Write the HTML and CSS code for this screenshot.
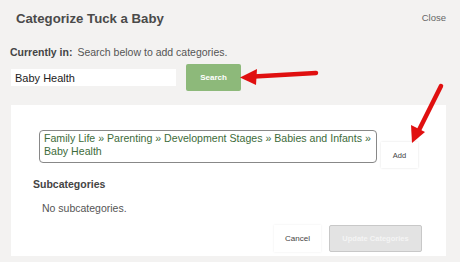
FILE: index.html
```html
<!DOCTYPE html>
<html>
<head>
<meta charset="utf-8">
<link rel="stylesheet" href="styles.css">
</head>
<body>
<div class="dialog">
  <div class="header">
    <h1 class="title">Categorize Tuck a Baby</h1>
    <span class="close">Close</span>
  </div>
  <div class="current">
    <span class="current-label">Currently in:</span>
    <span class="current-text">Search below to add categories.</span>
  </div>
  <div class="search-row">
    <div class="search-input">Baby Health</div>
    <button class="btn-search">Search</button>
  </div>
  <div class="panel">
    <div class="result-row">
      <div class="crumbs">Family Life » Parenting » Development Stages » Babies and Infants » Baby Health</div>
      <button class="btn-add">Add</button>
    </div>
    <div class="sub-title">Subcategories</div>
    <div class="sub-none">No subcategories.</div>
    <div class="actions">
      <button class="btn-cancel">Cancel</button>
      <button class="btn-update">Update Categories</button>
    </div>
  </div>
</div>
<svg class="arrows" width="460" height="262" viewBox="0 0 460 262">
  <g stroke="#e01010" stroke-width="4.5" stroke-linecap="round" fill="none">
    <path d="M316 73 L254 76.5"/>
    <path d="M441 86 L418 132"/>
  </g>
  <g fill="#e01010">
    <path d="M240 77.5 L257 69 L256 85 Z"/>
    <path d="M412 143 L411 125 L425 132 Z"/>
  </g>
</svg>
</body>
</html>
```
FILE: styles.css
```css
* { box-sizing: border-box; }
html, body { margin: 0; padding: 0; }
body {
  width: 460px;
  height: 262px;
  background: #f3f2f1;
  font-family: "Liberation Sans", Arial, sans-serif;
  color: #444;
  overflow: hidden;
  position: relative;
}
.dialog {
  padding: 9px 14px 0 11px;
}
.header {
  display: flex;
  justify-content: space-between;
  align-items: center;
  padding-left: 5px;
  height: 18px;
}
.title {
  margin: 0;
  font-size: 13.2px;
  font-weight: bold;
  color: #4a4a4a;
}
.close {
  font-size: 9.5px;
  color: #666;
  margin-top: -2px;
}
.current {
  margin-top: 19px;
  margin-left: -1px;
  font-size: 10.5px;
  display: flex;
  gap: 5px;
  color: #555;
}
.current-label { font-weight: bold; color: #444; }
.search-row {
  display: flex;
  align-items: center;
  margin-top: 6px;
  gap: 10px;
}
.search-input {
  width: 165px;
  height: 17px;
  background: #fff;
  font-size: 11px;
  color: #222;
  padding: 2px 0 0 4px;
  line-height: 14px;
}
.btn-search {
  width: 55px;
  height: 27px;
  border: none;
  border-radius: 2px;
  background: #8db97a;
  color: #fff;
  font-family: inherit;
  font-weight: bold;
  font-size: 8px;
  padding: 0;
}
.panel {
  margin-top: 14px;
  width: 435px;
  height: 151px;
  background: #fff;
  padding: 25px 0 0 28px;
}
.result-row {
  display: flex;
  align-items: flex-start;
  gap: 4px;
}
.crumbs {
  width: 338px;
  height: 33px;
  border: 1px solid #888;
  border-radius: 4px;
  padding: 1px 4px 0 4px;
  font-size: 10.6px;
  line-height: 13px;
  color: #3d6b3a;
}
.btn-add {
  margin-top: 12px;
  width: 37px;
  height: 26px;
  background: #fff;
  border: none;
  box-shadow: 0 0 2px rgba(0,0,0,0.12);
  font-family: inherit;
  font-size: 7.5px;
  color: #444;
  padding: 0;
}
.sub-title {
  margin-top: 10px;
  margin-left: -6px;
  font-size: 10.5px;
  font-weight: bold;
  color: #444;
}
.sub-none {
  margin-top: 12px;
  margin-left: 3px;
  font-size: 10.5px;
  color: #555;
}
.actions {
  display: flex;
  justify-content: flex-end;
  gap: 8px;
  margin-top: 11px;
  padding-right: 24px;
}
.btn-cancel {
  width: 47px;
  height: 27px;
  background: #fff;
  border: none;
  box-shadow: 0 0 2px rgba(0,0,0,0.08);
  font-family: inherit;
  font-size: 8px;
  color: #444;
  padding: 0;
}
.btn-update {
  width: 93px;
  height: 27px;
  background: #e3e3e3;
  border: 1px solid #c8c8c8;
  border-radius: 2px;
  font-family: inherit;
  font-size: 7.5px;
  font-weight: bold;
  color: #f4f4f4;
  padding: 0;
}
.arrows {
  position: absolute;
  left: 0;
  top: 0;
  pointer-events: none;
}
```
